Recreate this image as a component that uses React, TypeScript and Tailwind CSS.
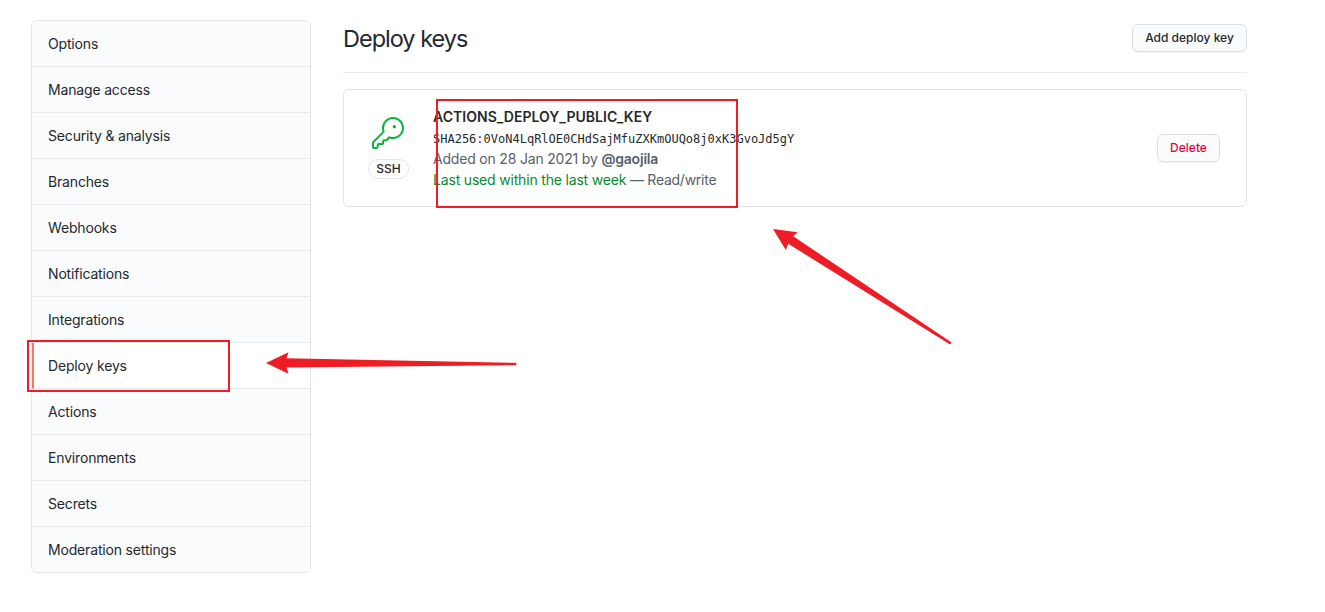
import React from "react";

const before = ["Options", "Manage access", "Security & analysis", "Branches", "Webhooks", "Notifications", "Integrations"];
const after = ["Actions", "Environments", "Secrets", "Moderation settings"];

function MenuItem({ label, selected = false }: { label: string; selected?: boolean }) {
  return (
    <a
      className={
        selected
          ? "flex h-[46px] items-center border-b border-[#e6e8ec] border-l-2 border-l-[#f9756a] bg-white pl-[14px] last:border-b-0"
          : "flex h-[46px] items-center border-b border-[#e6e8ec] bg-[#fafbfc] pl-4 last:h-[45px] last:border-b-0"
      }
    >
      {label}
    </a>
  );
}

function KeyIcon() {
  return (
    <svg viewBox="0 0 24 24" className="h-8 w-8 fill-[#0cb43f]">
      <path d="M16.75 8.5a1.25 1.25 0 100-2.5 1.25 1.25 0 000 2.5z" />
      <path
        fillRule="evenodd"
        d="M15.75 0a8.25 8.25 0 00-7.851 10.79L.513 18.178A1.75 1.75 0 000 19.414v2.836C0 23.217.784 24 1.75 24h1.5A1.75 1.75 0 005 22.25v-1a.25.25 0 01.25-.25h2.735a.75.75 0 00.545-.22l.214-.213A.875.875 0 009 19.948V18.5a.25.25 0 01.25-.25h1.086c.464 0 .91-.184 1.237-.513l1.636-1.636A8.25 8.25 0 1015.75 0zM9 8.25a6.75 6.75 0 114.288 6.287.75.75 0 00-.804.168l-1.971 1.972a.25.25 0 01-.177.073H9.25A1.75 1.75 0 007.5 18.5v1H5.25a1.75 1.75 0 00-1.75 1.75v1a.25.25 0 01-.25.25h-1.5a.25.25 0 01-.25-.25v-2.836a.25.25 0 01.073-.177l7.722-7.721a.75.75 0 00.168-.804A6.73 6.73 0 019 8.25z"
      />
    </svg>
  );
}

export default function App() {
  return (
    <div className="relative flex h-[612px] w-[1325px] items-start gap-8 overflow-hidden bg-white pt-5 pl-[31px] font-['Inter',sans-serif] text-sm text-[#24292e]">
      <nav className="w-[280px] shrink-0 overflow-hidden rounded-md border border-[#e1e4e8] tracking-[-0.17px]">
        {before.map((label) => (
          <MenuItem key={label} label={label} />
        ))}
        <MenuItem label="Deploy keys" selected />
        {after.map((label) => (
          <MenuItem key={label} label={label} />
        ))}
      </nav>

      <main className="w-[904px]">
        <header className="flex h-[53px] items-start justify-between border-b border-[#eaecef]">
          <h2 className="pt-px text-[23.5px] leading-9 tracking-[-1px]">Deploy keys</h2>
          <button className="mt-1 h-7 w-[115px] rounded-md border border-[#dcdfe2] bg-[#fafbfc] text-xs font-medium shadow-[0_1px_0_rgba(27,31,35,0.04)]">
            Add deploy key
          </button>
        </header>

        <section className="mt-4 flex h-[118px] items-start rounded-md border border-[#e1e4e8]">
          <div className="ml-6 mt-[27px] flex w-[41px] flex-col items-center">
            <div className="mr-px flex w-8">
              <KeyIcon />
            </div>
            <span className="mt-[10px] flex h-5 w-[41px] items-center justify-center rounded-full border border-[#e1e4e8] text-xs font-medium">
              SSH
            </span>
          </div>
          <div className="ml-6 mt-4 flex flex-col whitespace-nowrap leading-[21px] text-[#586069]">
            <strong className="font-semibold tracking-[0.03px] text-[#24292e]">ACTIONS_DEPLOY_PUBLIC_KEY</strong>
            <code className="h-[21px] pt-0.5 font-['DejaVu_Sans_Mono',monospace] text-xs leading-[21px] text-[#24292e]">
              SHA256:0VoN4LqRlOE0CHdSajMfuZXKmOUQo8j0xK3GvoJd5gY
            </code>
            <span className="tracking-[-0.19px]">
              Added on 28 Jan 2021 by <b className="font-semibold">@gaojila</b>
            </span>
            <span className="tracking-[-0.26px]">
              <span className="tracking-[-0.18px] text-[#088a32]">Last used within the last week</span> — Read/write
            </span>
          </div>
          <button className="mr-[26px] mt-[44px] ml-auto h-7 w-[63px] rounded-md border border-[#dcdfe2] bg-[#fafbfc] text-xs font-medium text-[#d9073f] shadow-[0_1px_0_rgba(27,31,35,0.04)]">
            Delete
          </button>
        </section>
      </main>

      <div className="absolute left-[27px] top-[340px] h-[52px] w-[203px] border-2 border-[#ee1c25]" />
      <div className="absolute left-[436px] top-[99px] h-[109px] w-[302px] border-2 border-[#ee1c25]" />
      <svg className="absolute left-[260px] top-[345px] h-[40px] w-[265px] fill-[#ee1c25]" viewBox="260 345 265 40">
        <path d="M266 363L288.5 352.3L286.5 358.3L516 362.8Q517 364 516 365.2L286.5 367.6L288.5 373.8Z" />
      </svg>
      <svg className="absolute left-[765px] top-[220px] h-[130px] w-[195px] fill-[#ee1c25]" viewBox="765 220 195 130">
        <path d="M773 229L797.5 232.3L793.2 236.3L951.3 342.2Q951.5 344 949.7 344.2L788.3 243.8L785.8 250Z" />
      </svg>
    </div>
  );
}
